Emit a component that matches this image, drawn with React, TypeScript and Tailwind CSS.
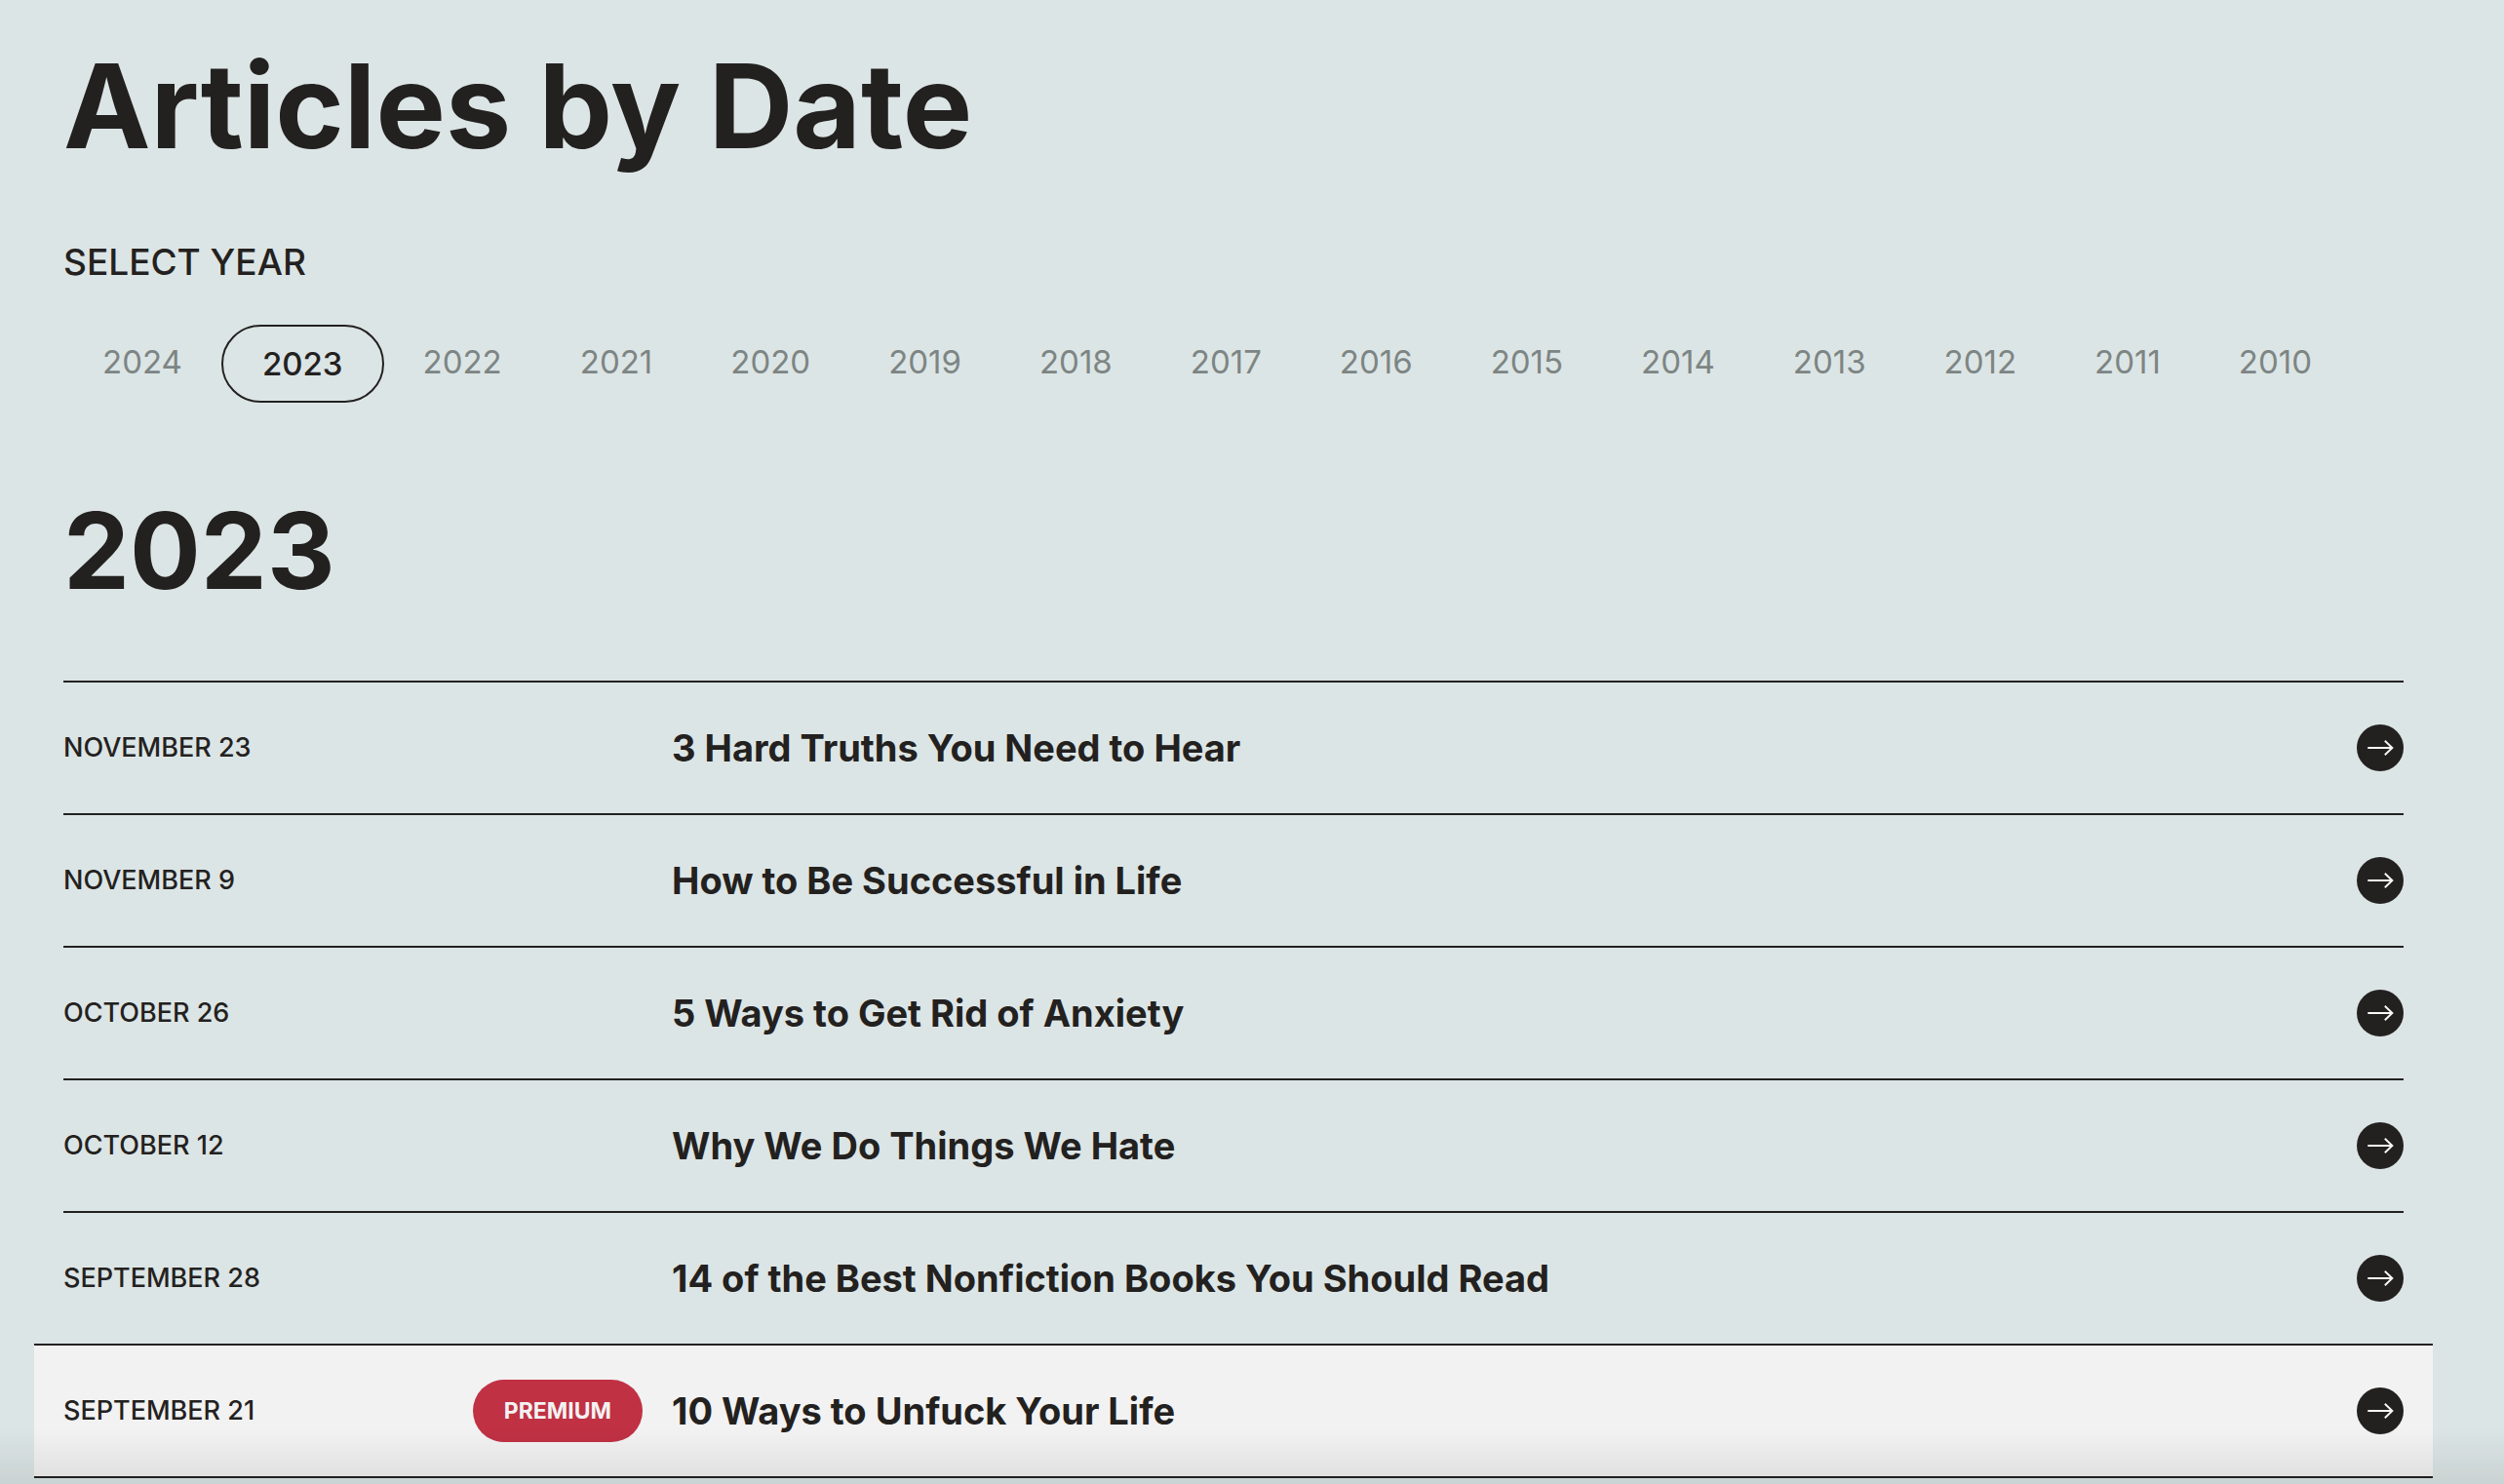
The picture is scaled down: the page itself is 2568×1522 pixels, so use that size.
import React, { useState } from 'react';

interface Article {
  date: string;
  title: string;
  premium?: boolean;
}

const YEARS = [2024, 2023, 2022, 2021, 2020, 2019, 2018, 2017, 2016, 2015, 2014, 2013, 2012, 2011, 2010];

const ARTICLES: Article[] = [
  { date: 'November 23', title: '3 Hard Truths You Need to Hear' },
  { date: 'November 9', title: 'How to Be Successful in Life' },
  { date: 'October 26', title: '5 Ways to Get Rid of Anxiety' },
  { date: 'October 12', title: 'Why We Do Things We Hate' },
  { date: 'September 28', title: '14 of the Best Nonfiction Books You Should Read' },
  { date: 'September 21', title: '10 Ways to Unfuck Your Life', premium: true },
];

const ArrowBadge: React.FC = () => (
  <svg viewBox="0 0 48 48" className="h-12 w-12 shrink-0" fill="none" aria-hidden="true">
    <circle cx="24" cy="24" r="24" fill="#232120" />
    <path d="M11.3 24H36.4M28.8 16.8L36.4 24L28.8 31.2" stroke="#f8f8f6" strokeWidth="1.9" />
  </svg>
);

const YearButton: React.FC<{ year: number; selected: boolean; onClick: () => void }> = ({ year, selected, onClick }) => (
  <button
    type="button"
    onClick={onClick}
    aria-pressed={selected}
    className={
      selected
        ? 'rounded-full border-2 border-[#232120] px-10 py-4 text-[33px] leading-[44px] font-medium'
        : 'px-10 py-4 text-[33px] leading-[44px] text-[#7d8584]'
    }
  >
    {year}
  </button>
);

const ArticleRow: React.FC<{ article: Article }> = ({ article }) => (
  <li
    className={
      article.premium
        ? '-mx-[30px] border-y-2 border-[#232120] bg-[#f2f2f2] px-[30px]'
        : 'border-t-2 border-[#232120]'
    }
  >
    <a href="#article" className="flex h-[134px] items-center">
      <span className="flex w-[624px] shrink-0 items-center justify-between pr-[30px]">
        <span className="text-[27px] leading-8 font-medium uppercase">{article.date}</span>
        {article.premium && (
          <span className="rounded-full bg-[#c03144] px-8 py-4 text-[23px] leading-8 font-bold text-[#f2f2f2] uppercase">
            Premium
          </span>
        )}
      </span>
      <span className="grow text-[38px] leading-[48px] font-bold">{article.title}</span>
      <ArrowBadge />
    </a>
  </li>
);

export default function App() {
  const [year, setYear] = useState(2023);

  return (
    <main className="min-h-screen bg-[#dce5e5] pt-[41px] pr-[103px] pl-[65px] font-['Inter',sans-serif] text-[#232120]">
      <h1 className="text-[120px] leading-[136px] font-bold">Articles by Date</h1>

      <h2 className="mt-[68px] text-[37px] leading-[48px] font-medium uppercase" id="select-year">
        Select year
      </h2>
      <nav aria-labelledby="select-year" className="mt-10 flex items-start">
        {YEARS.map((y) => (
          <YearButton key={y} year={y} selected={y === year} onClick={() => setYear(y)} />
        ))}
      </nav>

      <h2 className="mt-[84px] text-[108px] leading-[136px] font-bold">{year}</h2>

      <ul className="mt-[65px]">
        {ARTICLES.map((article) => (
          <ArticleRow key={article.title} article={article} />
        ))}
      </ul>

      {/* shade along the bottom edge of the window */}
      <div className="pointer-events-none fixed inset-x-0 bottom-0 h-14 bg-linear-to-t from-black/8 to-transparent" />
    </main>
  );
}
